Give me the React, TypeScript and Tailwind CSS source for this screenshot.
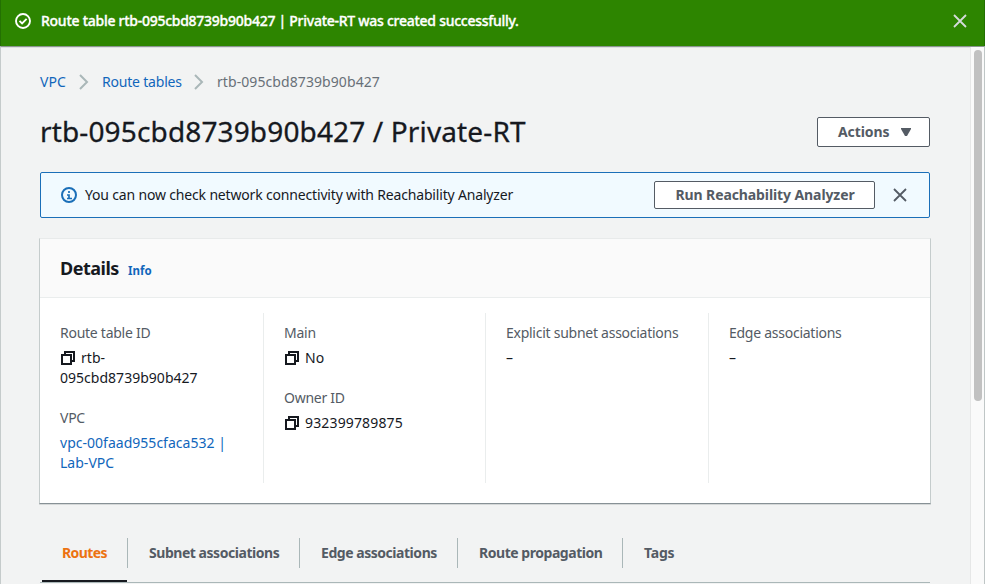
import React from "react";
import clsx from "clsx";

function CloseIcon({ className }: { className?: string }) {
  return (
    <svg viewBox="0 0 16 16" className={clsx("size-4 shrink-0", className)} fill="none" stroke="currentColor" strokeWidth="1.8">
      <path d="M2 2l12 12M14 2L2 14" />
    </svg>
  );
}

function CopyIcon() {
  return (
    <svg viewBox="0 0 16 16" className="mr-[5px] inline-block size-4 align-[-3px]" fill="none" stroke="#16191f" strokeWidth="2">
      <path d="M2 5h9v9H2z" />
      <path d="M5 5V2h9v9h-3" />
    </svg>
  );
}

function Chevron() {
  return (
    <svg viewBox="0 0 10 16" className="h-4 w-[10px] shrink-0" fill="none" stroke="#aab7b8" strokeWidth="2">
      <path d="M1 1l7 7-7 7" />
    </svg>
  );
}

function Field({ label, children }: { label: string; children: React.ReactNode }) {
  return (
    <div>
      <div className="mb-[5px] tracking-[-0.26px] text-[#545b64]">{label}</div>
      <div className="tracking-[0.02px]">{children}</div>
    </div>
  );
}

function Tab({ label, className }: { label: string; className?: string }) {
  return (
    <div className={clsx("h-[30px] shrink-0 whitespace-nowrap pl-[21px] leading-[30px]", className)}>{label}</div>
  );
}

export default function App() {
  return (
    <div className="h-[584px] w-[994px] overflow-hidden bg-white font-['Noto_Sans',sans-serif] text-sm leading-5 text-[#16191f]">
      <div className="flex h-full w-[985px] flex-col">
        <header className="flex h-[46px] shrink-0 items-center border-x border-[#237002] bg-[#2d8500] pb-1 pl-[14px] pr-4 text-white">
          <svg viewBox="0 0 16 16" className="mr-[10px] size-4 shrink-0" fill="none" stroke="currentColor" strokeWidth="1.9">
            <circle cx="8" cy="8" r="7" />
            <path d="M4.5 7.8l2.6 2.6 4.5-4.5" />
          </svg>
          <span className="whitespace-nowrap font-medium tracking-[-0.265px] [-webkit-text-stroke:0.35px]">
            Route table rtb-095cbd8739b90b427 | Private-RT was created successfully.
          </span>
          <CloseIcon className="ml-auto text-[#d5dbdb]" />
        </header>

        <div className="flex min-h-0 flex-1 border-l border-r border-t border-l-[#c5cbcb] border-r-[#bfc6c6] border-t-[#8a9690] bg-[#f2f3f3] shadow-[inset_0_1px_0_#dddfe0]">
          <main className="w-[969px] pl-[39px]">
            <nav className="mt-[25px] flex h-5 items-center whitespace-nowrap text-[#1166bb]">
              <span className="w-[39px] tracking-[0.05px]">VPC</span>
              <Chevron />
              <span className="ml-[13px] w-[92px] tracking-[-0.2px]">Route tables</span>
              <Chevron />
              <span className="ml-[13px] tracking-[0.08px] text-[#687078]">rtb-095cbd8739b90b427</span>
            </nav>

            <div className="mt-[25px] flex h-[30px] w-[890px] items-center justify-between">
              <h1 className="-mt-[2px] whitespace-nowrap text-[28px] leading-9 tracking-[0.14px] [-webkit-text-stroke:0.3px]">rtb-095cbd8739b90b427 / Private-RT</h1>
              <button className="flex h-[30px] w-[113px] items-center rounded-[2px] border border-[#545b64] bg-white pl-5 font-bold text-[#545b64]">
                <span className="w-[63px] text-left tracking-[-0.1px]">Actions</span>
                <svg viewBox="0 0 10 8" className="h-2 w-[10px]" fill="currentColor">
                  <path d="M0 0h10v1L6 8H4L0 1z" />
                </svg>
              </button>
            </div>

            <section className="mt-[25px] flex h-[46px] w-[890px] items-center rounded-[2px] border border-[#1b6fb8] bg-[#f1faff] pl-5 pr-[21px]">
              <svg viewBox="0 0 16 16" className="mr-2 size-4 shrink-0" fill="none" stroke="#1b6fb8" strokeWidth="2">
                <circle cx="8" cy="8" r="7" />
                <path d="M8 4v2M6 8h2v3M6 11.5h5" strokeWidth="1.7" />
              </svg>
              <span className="whitespace-nowrap tracking-[-0.17px]">You can now check network connectivity with Reachability Analyzer</span>
              <button className="ml-auto h-7 w-[221px] rounded-[2px] border border-[#545b64] bg-white pl-px font-bold leading-[26px] text-[#545b64]">
                <span className="whitespace-nowrap tracking-[-0.1px]">Run Reachability Analyzer</span>
              </button>
              <CloseIcon className="ml-[17px] text-[#545b64]" />
            </section>

            <section className="-ml-px mt-5 h-[266px] w-[892px] border border-b-[#879196] border-l-[#c5cccc] border-r-[#c5cccc] border-t-[#e8eaea] bg-white shadow-[0_1px_0_#d5d8d8]">
              <div className="flex h-[59px] items-center border-b border-[#eaeded] bg-[#fafafa] pl-5">
                <h2 className="w-[68px] text-lg font-bold leading-[22px] tracking-[-0.5px]">Details</h2>
                <span className="mt-[5px] text-[11.5px] font-bold text-[#1166bb]">Info</span>
              </div>
              <div className="mt-[15px] flex h-[170px] whitespace-nowrap">
                <div className="flex w-[224px] flex-col gap-5 border-r border-[#eaeded] pl-5 pt-[10px]">
                  <Field label="Route table ID">
                    <CopyIcon />
                    rtb-
                    <br />
                    095cbd8739b90b427
                  </Field>
                  <Field label="VPC">
                    <span className="text-[#1166bb]">
                      vpc-00faad955cfaca532 |<br />
                      Lab-VPC
                    </span>
                  </Field>
                </div>
                <div className="flex w-[222px] flex-col gap-5 border-r border-[#eaeded] pl-5 pt-[10px]">
                  <Field label="Main">
                    <CopyIcon />
                    No
                  </Field>
                  <Field label="Owner ID">
                    <CopyIcon />
                    <span className="tracking-[0.15px]">932399789875</span>
                  </Field>
                </div>
                <div className="w-[223px] border-r border-[#eaeded] pl-5 pt-[10px]">
                  <Field label="Explicit subnet associations">–</Field>
                </div>
                <div className="pl-5 pt-[10px]">
                  <Field label="Edge associations">–</Field>
                </div>
              </div>
            </section>

            <div className="mt-[34px] flex h-[45px] w-[890px] border-b border-[#aab7b8] font-bold tracking-[-0.46px] text-[#545b64]">
              <div className="ml-[2px] h-[44px] w-[85px] border-b-2 border-[#16191f] pl-5 leading-[30px] tracking-[-0.6px] text-[#ec7211]">Routes</div>
              <Tab label="Subnet associations" className="w-[173px] border-x border-[#aab7b8]" />
              <Tab label="Edge associations" className="w-[158px] border-r border-[#aab7b8]" />
              <Tab label="Route propagation" className="w-[165px] border-r border-[#aab7b8]" />
              <Tab label="Tags" className="tracking-[-0.2px]" />
            </div>
          </main>

          <aside className="flex flex-1 justify-center border-l border-[#e6e7e7] bg-[#fafafa] pt-[3px]">
            <div className="h-[351px] w-2 rounded-full bg-[#c1c1c1]" />
          </aside>
        </div>
      </div>
    </div>
  );
}
